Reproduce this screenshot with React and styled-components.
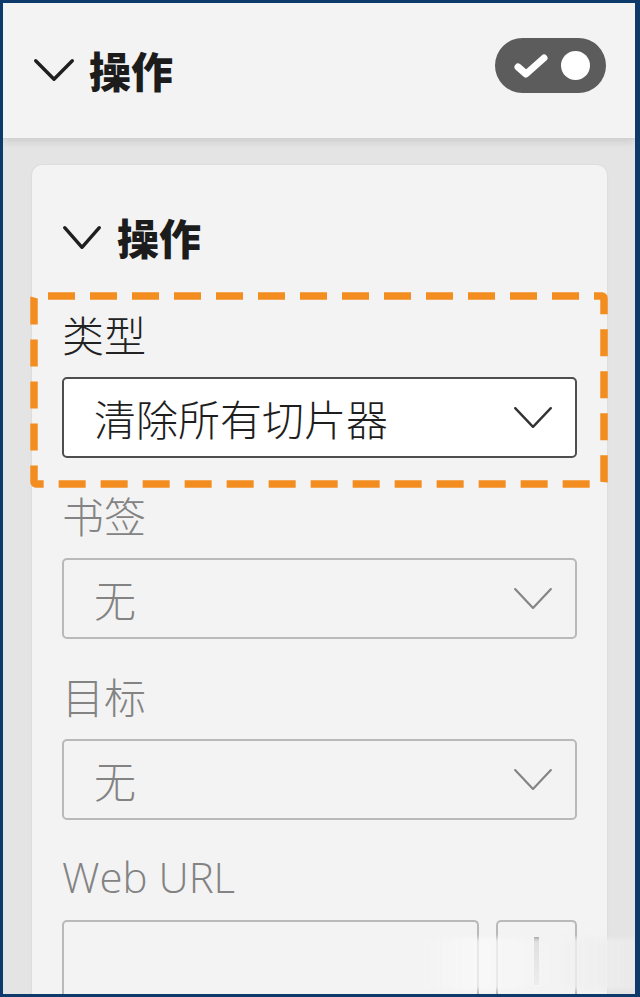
import React from "react";
import styled, { createGlobalStyle } from "styled-components";

const Global = createGlobalStyle`
  html, body { margin: 0; padding: 0; background: #0e3a6b; }
  * { box-sizing: border-box; }
  body { font-family: "Noto Sans", "Noto Sans CJK SC", sans-serif; }
`;

const Frame = styled.div`
  position: relative;
  width: 640px;
  height: 997px;
  border-style: solid;
  border-color: #0e3a6b;
  border-width: 3px 5px 3px 3px;
  background: #e4e4e4;
  overflow: hidden;
  display: flex;
  flex-direction: column;
`;

const Header = styled.header`
  position: relative;
  z-index: 1;
  flex: 0 0 135px;
  display: flex;
  align-items: center;
  padding: 0 29px 0 30px;
  background: #f3f3f3;
  box-shadow: 0 1px 0 #d2d2d2, 0 3px 8px rgba(0, 0, 0, 0.12);
`;

const TitleRow = styled.div`
  display: flex;
  align-items: center;
  gap: ${(p) => p.$gap}px;
  flex: 1;
`;

const Title = styled.h2`
  margin: 0;
  font-family: "Noto Sans CJK SC", sans-serif;
  font-weight: 900;
  font-size: ${(p) => p.$size}px;
  line-height: 1.2;
  color: #1c1c1c;
`;

const Toggle = styled.div`
  width: 111px;
  height: 55px;
  border-radius: 28px;
  background: #5c5c5c;
  display: flex;
  align-items: center;
  padding: 0 16px 0 18px;
  justify-content: space-between;
  margin-bottom: 10px;
`;

const Knob = styled.span`
  width: 29px;
  height: 29px;
  border-radius: 50%;
  background: #ffffff;
`;

const Body = styled.main`
  flex: 1;
  display: flex;
  padding: 27px 28px 0 29px;
  min-height: 0;
`;

const Card = styled.section`
  flex: 1;
  background: #f3f3f3;
  border-radius: 10px 10px 0 0;
  box-shadow: 0 0 0 1px #dedede, 0 1px 3px rgba(0, 0, 0, 0.06);
  padding: 47px 30px 0 30px;
  display: flex;
  flex-direction: column;
`;

const CardHead = styled.div`
  display: flex;
  align-items: center;
  margin-bottom: 47px;
`;

const Form = styled.div`
  display: flex;
  flex-direction: column;
  gap: 32px;
`;

const Field = styled.div`
  position: relative;
  display: flex;
  flex-direction: column;
  gap: 18px;
`;

const Highlight = styled.svg`
  position: absolute;
  left: -32px;
  top: -17px;
  width: 578px;
  height: 196px;
  overflow: visible;
  pointer-events: none;
`;

const Label = styled.div`
  font-family: ${(p) =>
    p.$latin
      ? `"Open Sans", "Noto Sans", sans-serif`
      : `"Noto Sans CJK SC", sans-serif`};
  font-weight: 300;
  font-size: 42px;
  line-height: 50px;
  height: 50px;
  color: ${(p) => (p.$muted ? "#838383" : "#222222")};
`;

const Select = styled.div`
  height: 81px;
  display: flex;
  align-items: center;
  justify-content: space-between;
  padding: 0 22px 0 30px;
  border-radius: 5px;
  border: 2px solid ${(p) => (p.$active ? "#4e4e4e" : "#b9b9b9")};
  background: ${(p) => (p.$active ? "#ffffff" : "#f3f3f3")};
  font-family: "Noto Sans CJK SC", sans-serif;
  font-weight: 300;
  font-size: 42px;
  color: ${(p) => (p.$active ? "#1e1e1e" : "#838383")};
`;

const UrlRow = styled.div`
  display: flex;
  gap: 17px;
  height: 90px;
`;

const Input = styled.div`
  flex: 1;
  border: 2px solid #b9b9b9;
  border-bottom: none;
  border-radius: 5px 5px 0 0;
  background: #f3f3f3;
`;

const FxButton = styled.div`
  width: 81px;
  border: 2px solid #b9b9b9;
  border-bottom: none;
  border-radius: 5px 5px 0 0;
  display: flex;
  justify-content: center;
  padding-top: 15px;
`;

const Bar = styled.span`
  width: 5px;
  height: 48px;
  background: linear-gradient(#8e8e8e, #d0d0d0);
`;

const Watermark = styled.div`
  position: absolute;
  right: 0;
  bottom: 4px;
  width: 220px;
  height: 52px;
  background: linear-gradient(90deg, rgba(255,255,255,0) 0%, rgba(250,250,250,0.75) 30%, rgba(235,235,235,0.85) 100%);
  filter: blur(2px);
  pointer-events: none;
`;

const Chevron = ({ w, h, stroke, color }) => (
  <svg width={w} height={h} viewBox={`0 0 ${w} ${h}`} fill="none">
    <path
      d={`M${stroke / 2 + 1} ${stroke / 2 + 1} L${w / 2} ${h - stroke / 2 - 1} L${w - stroke / 2 - 1} ${stroke / 2 + 1}`}
      stroke={color}
      strokeWidth={stroke}
      strokeLinecap="round"
      strokeLinejoin="round"
    />
  </svg>
);

const Check = () => (
  <svg width="36" height="26" viewBox="0 0 36 26" fill="none">
    <path d="M5 14 L13 21 L31 5" stroke="#ffffff" strokeWidth="7" strokeLinecap="round" strokeLinejoin="round" />
  </svg>
);

export default function App() {
  return (
    <>
      <Global />
      <Frame>
        <Header>
          <TitleRow $gap={14}>
            <Chevron w={42} h={24} stroke={3.4} color="#1f1f1f" />
            <Title $size={42}>操作</Title>
          </TitleRow>
          <Toggle>
            <Check />
            <Knob />
          </Toggle>
        </Header>
        <Body>
          <Card>
            <CardHead>
              <TitleRow $gap={15}>
                <Chevron w={40} h={25} stroke={3.4} color="#1f1f1f" />
                <Title $size={42}>操作</Title>
              </TitleRow>
            </CardHead>
            <Form>
              <Field>
                <Label>类型</Label>
                <Select $active>
                  <span>清除所有切片器</span>
                  <Chevron w={40} h={23} stroke={2.4} color="#333333" />
                </Select>
                <Highlight viewBox="0 0 578 196">
                  <rect
                    x="4"
                    y="4"
                    width="570"
                    height="188"
                    rx="2"
                    fill="none"
                    stroke="#f38d1f"
                    strokeWidth="7.5"
                    strokeDasharray="27 15"
                    strokeDashoffset="-12"
                  />
                </Highlight>
              </Field>
              <Field>
                <Label $muted>书签</Label>
                <Select>
                  <span>无</span>
                  <Chevron w={40} h={23} stroke={2.2} color="#858585" />
                </Select>
              </Field>
              <Field>
                <Label $muted>目标</Label>
                <Select>
                  <span>无</span>
                  <Chevron w={40} h={23} stroke={2.2} color="#858585" />
                </Select>
              </Field>
              <Field>
                <Label $muted $latin>Web URL</Label>
                <UrlRow>
                  <Input />
                  <FxButton>
                    <Bar />
                  </FxButton>
                </UrlRow>
              </Field>
            </Form>
          </Card>
        </Body>
        <Watermark />
      </Frame>
    </>
  );
}
